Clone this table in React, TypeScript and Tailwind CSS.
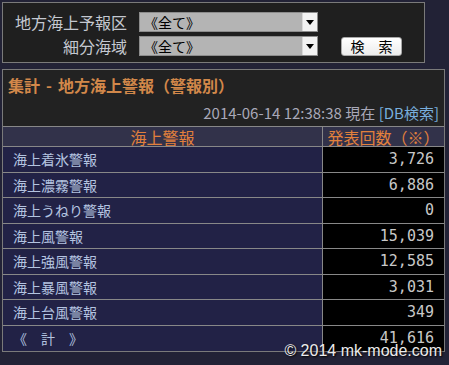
import React from "react";

const rows = [
  { label: "海上着氷警報", count: "3,726" },
  { label: "海上濃霧警報", count: "6,886" },
  { label: "海上うねり警報", count: "0" },
  { label: "海上風警報", count: "15,039" },
  { label: "海上強風警報", count: "12,585" },
  { label: "海上暴風警報", count: "3,031" },
  { label: "海上台風警報", count: "349" },
];

const jp = { fontFamily: '"Noto Sans CJK JP", "Noto Sans", sans-serif' };
const mono = { fontFamily: '"DejaVu Sans Mono", "Liberation Mono", monospace' };

function Select() {
  return (
    <div className="flex h-[20px] w-[179px] border border-[#8c8c8c] bg-[#b4b4b4]">
      <span className="flex-1 pl-[4px] text-[14px] leading-[18px] text-black">《全て》</span>
      <span className="flex w-[15px] items-center justify-center border-l border-[#d8d8d8] bg-[#f2f2f2]">
        <svg width="8" height="5" viewBox="0 0 8 5">
          <path d="M0 0 H8 L4 5 Z" fill="#000" />
        </svg>
      </span>
    </div>
  );
}

export default function App() {
  return (
    <div className="relative h-[365px] w-[449px] bg-[#222236] pl-[2px] pt-[2px]" style={jp}>
      <div className="h-[61px] w-[423px] border border-[#7a7a7a] bg-[#1f1f1f]">
        <div className="mt-[9px] flex h-[20px] items-center">
          <span className="w-[124px] text-right text-[16px] leading-[20px] text-[#c4c8d0]">地方海上予報区</span>
          <div className="ml-[12px]">
            <Select />
          </div>
        </div>
        <div className="mt-[4px] flex h-[20px] items-center">
          <span className="w-[124px] text-right text-[16px] leading-[20px] text-[#c4c8d0]">細分海域</span>
          <div className="ml-[12px]">
            <Select />
          </div>
          <button
            type="button"
            className="ml-[23px] h-[19px] w-[61px] rounded-[3px] border border-[#a8a8a8] bg-gradient-to-b from-white to-[#ececec] text-[14px] leading-[17px] text-black"
          >
            検　索
          </button>
        </div>
      </div>

      <div className="mt-[6px] h-[283px] w-[443px] border border-[#7a7a7a] bg-[#222222]">
        <div className="h-[56px] px-[5px] pt-[5px]">
          <p className="text-[16px] font-bold leading-[20px] text-[#d2884a]">
            集計<span className="mx-[6px]">-</span>地方海上警報（警報別）
          </p>
          <p className="mt-[8px] text-right text-[15px] leading-[20px] text-[#a8a8b8]">
            2014-06-14 12:38:38 現在 <span className="text-[#78aedc]">[DB検索]</span>
          </p>
        </div>
        <div className="grid grid-cols-[320px_1fr] border-t border-[#888]">
          <div className="h-[20px] border-b border-r border-[#888] bg-[#32324a] text-center text-[16px] leading-[20px] text-[#e2803c]">
            海上警報
          </div>
          <div className="h-[20px] border-b border-[#888] bg-[#32324a] text-center text-[16px] leading-[20px] text-[#e2803c]">
            発表回数（※）
          </div>
          {rows.map((r) => (
            <React.Fragment key={r.label}>
              <div className="h-[25.5px] border-b border-r border-[#888] bg-[#222246] pl-[10px] text-[14px] leading-[24px] text-[#b4c4e0]">
                {r.label}
              </div>
              <div
                className="h-[25.5px] border-b border-[#888] bg-black pr-[10px] text-right text-[15px] leading-[24px] text-[#c8c8c8]"
                style={mono}
              >
                {r.count}
              </div>
            </React.Fragment>
          ))}
          <div className="h-[25px] border-r border-[#888] bg-[#222246] pl-[10px] text-[14px] leading-[24px] text-[#b4c4e0]">
            《　計　》
          </div>
          <div className="h-[25px] bg-black pr-[10px] text-right text-[15px] leading-[24px] text-[#c8c8c8]" style={mono}>
            41,616
          </div>
        </div>
      </div>

      <div
        className="absolute right-[7px] top-[343px] text-[16px] leading-[16px] text-[#ececec] [text-shadow:1px_1px_2px_#000]"
        style={{ fontFamily: '"Liberation Sans", Arial, sans-serif' }}
      >
        © 2014 mk-mode.com
      </div>
    </div>
  );
}
